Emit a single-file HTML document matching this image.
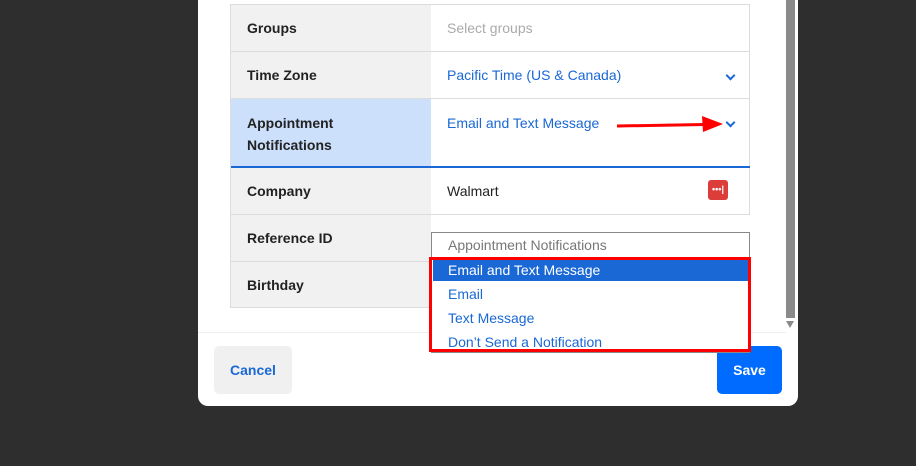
<!DOCTYPE html>
<html><head><style>
*{margin:0;padding:0;box-sizing:border-box}
body{width:916px;height:466px;background:#2e2e2e;position:relative;overflow:hidden;font-family:"Liberation Sans",sans-serif;font-size:14px}
.modal{position:absolute;left:198px;top:-10px;width:600px;height:416px;background:#fff;border-radius:10px}
.abs{position:absolute}
.lab{position:absolute;left:230px;width:201px;background:#f1f1f1;border-top:1px solid #dcdcdc;font-weight:bold;color:#222;padding-left:17px}
.val{position:absolute;left:431px;width:319px;border-top:1px solid #dcdcdc;padding-left:16px;border-right:1px solid #dcdcdc}
.chev{position:absolute;right:15px;width:7px;height:7px;border-right:2px solid #1a68d6;border-bottom:2px solid #1a68d6;transform:rotate(45deg)}
.opt{position:absolute;left:448px;color:#1a68d6}
</style></head><body>
<div class="modal"></div>
<div class="abs" style="left:786px;top:0;width:9px;height:318px;background:#8a8a8a"></div>
<div class="abs" style="left:786px;top:321px;width:0;height:0;border-left:4.5px solid transparent;border-right:4.5px solid transparent;border-top:7px solid #8a8a8a"></div>

<div class="lab" style="top:4px;height:47px;line-height:47px">Groups</div>
<div class="val" style="top:4px;height:47px;line-height:47px;color:#aaa">Select groups</div>
<div class="lab" style="top:51px;height:47px;line-height:47px">Time Zone</div>
<div class="val" style="top:51px;height:47px;line-height:47px;color:#1a68d6">Pacific Time (US &amp; Canada)<div class="chev" style="top:20px"></div></div>
<div class="lab" style="top:98px;height:69px;background:#cce0fb;line-height:22px;padding-top:13px">Appointment<br>Notifications</div>
<div class="val" style="top:98px;height:69px;line-height:22px;padding-top:13px;color:#1a68d6">Email and Text Message<div class="chev" style="top:20px"></div></div>
<div class="abs" style="left:230px;top:166px;width:520px;height:2px;background:#1a68d6"></div>
<div class="lab" style="top:168px;height:47px;line-height:46px;border-top:none">Company</div>
<div class="val" style="top:168px;height:47px;line-height:46px;border-top:none;color:#222">Walmart
<div class="abs" style="left:277px;top:12px;width:20px;height:20px;background:#dd3d3a;border-radius:3px;color:#fff;font-size:9px;line-height:19px;text-align:center;font-weight:bold">•••|</div></div>
<div class="lab" style="top:214px;height:47px;line-height:47px">Reference ID</div>
<div class="val" style="top:214px;height:47px;border-right:none"></div>
<div class="lab" style="top:261px;height:47px;line-height:47px;border-bottom:1px solid #dcdcdc">Birthday</div>
<div class="abs" style="left:230px;top:4px;width:1px;height:304px;background:#dcdcdc"></div>

<div class="abs" style="left:198px;top:332px;width:588px;height:1px;background:#eee"></div>
<div class="abs" style="left:214px;top:346px;width:78px;height:48px;background:#f0f0f0;border-radius:5px;color:#1a68d6;font-weight:bold;text-align:center;line-height:48px">Cancel</div>
<div class="abs" style="left:717px;top:346px;width:65px;height:48px;background:#006bff;border-radius:5px;color:#fff;font-weight:bold;text-align:center;line-height:48px">Save</div>

<div class="abs" style="left:431px;top:232px;width:319px;height:121px;background:#fff;border:1px solid #888"></div>
<div class="abs" style="left:448px;top:237px;color:#777;line-height:16px">Appointment Notifications</div>
<div class="abs" style="left:433px;top:259px;width:315px;height:22px;background:#1a68d6"></div>
<div class="opt" style="top:262px;color:#fff">Email and Text Message</div>
<div class="opt" style="top:286px">Email</div>
<div class="opt" style="top:310px">Text Message</div>
<div class="opt" style="top:334px">Don’t Send a Notification</div>
<div class="abs" style="left:429px;top:257px;width:322px;height:95px;border:3px solid #f00"></div>

<svg class="abs" style="left:0;top:0" width="916" height="466"><line x1="617" y1="126" x2="705" y2="124.5" stroke="#f00" stroke-width="3"/><polygon points="702,116 723,124 703,132" fill="#f00"/></svg>
</body></html>
